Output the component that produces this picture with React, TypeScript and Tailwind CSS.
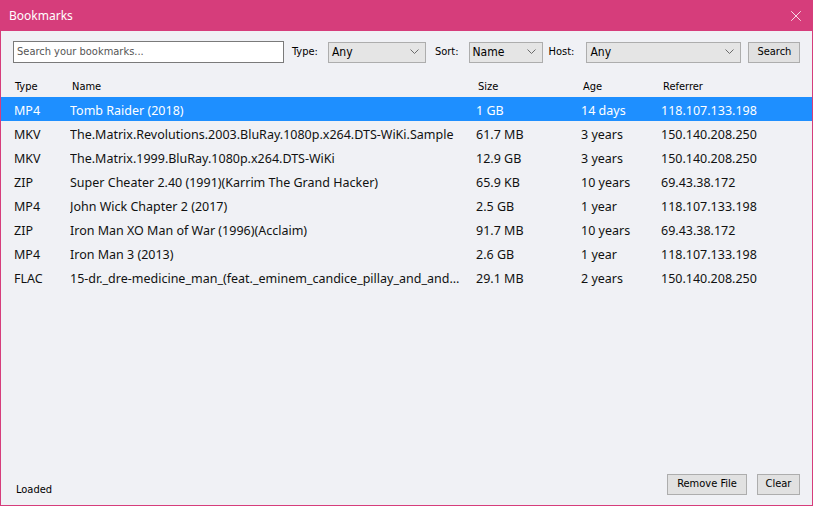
import { X } from 'lucide-react'

const rows = [
  { type: 'MP4', name: 'Tomb Raider (2018)', size: '1 GB', age: '14 days', ref: '118.107.133.198' },
  { type: 'MKV', name: 'The.Matrix.Revolutions.2003.BluRay.1080p.x264.DTS-WiKi.Sample', size: '61.7 MB', age: '3 years', ref: '150.140.208.250' },
  { type: 'MKV', name: 'The.Matrix.1999.BluRay.1080p.x264.DTS-WiKi', size: '12.9 GB', age: '3 years', ref: '150.140.208.250' },
  { type: 'ZIP', name: 'Super Cheater 2.40 (1991)(Karrim The Grand Hacker)', size: '65.9 KB', age: '10 years', ref: '69.43.38.172' },
  { type: 'MP4', name: 'John Wick Chapter 2 (2017)', size: '2.5 GB', age: '1 year', ref: '118.107.133.198' },
  { type: 'ZIP', name: 'Iron Man XO Man of War (1996)(Acclaim)', size: '91.7 MB', age: '10 years', ref: '69.43.38.172' },
  { type: 'MP4', name: 'Iron Man 3 (2013)', size: '2.6 GB', age: '1 year', ref: '118.107.133.198' },
  { type: 'FLAC', name: '15-dr._dre-medicine_man_(feat._eminem_candice_pillay_and_anderson_paak)', size: '29.1 MB', age: '2 years', ref: '150.140.208.250' },
]

const Chevron = () => (
  <svg width="9" height="6" viewBox="0 0 9 6" fill="none" stroke="#6b6b6b" strokeWidth="1">
    <path d="M0.5 0.5 L4.5 4.5 L8.5 0.5" />
  </svg>
)

const Select = ({ value, width }: { value: string; width: string }) => (
  <div className={`${width} h-[21px] flex items-center justify-between pl-[3px] pr-[6px] bg-[#e5e5e5] border border-[#adadad] text-[12px] text-black`}>
    <span>{value}</span>
    <Chevron />
  </div>
)

const ui = { fontFamily: '"Noto Sans", "Open Sans", sans-serif' }
const small = { fontFamily: '"DejaVu Sans Condensed", "Noto Sans", sans-serif' }

export default function App() {
  return (
    <div className="w-[813px] h-[506px] flex flex-col bg-[#d63d7b] p-[1px] pt-0" style={ui}>
      <div className="h-[31px] shrink-0 flex items-center justify-between pl-[8px] pr-[7px] text-white text-[12px]">
        <span>Bookmarks</span>
        <X className="w-[18px] h-[18px]" strokeWidth={1.1} />
      </div>
      <div className="flex-1 flex flex-col bg-[#f0f1f5] min-h-0">
        <div className="flex items-center mt-[10px] ml-[12px] h-[22px] text-[11px] text-black" style={small}>
          <div className="w-[271px] h-[22px] bg-white border border-[#7a7a7a] flex items-center pl-[3px] text-[#555]">
            Search your bookmarks...
          </div>
          <span className="ml-[8px] mr-[10px]">Type:</span>
          <Select value="Any" width="w-[98px]" />
          <span className="ml-[9px] mr-[10px]">Sort:</span>
          <Select value="Name" width="w-[74px]" />
          <span className="ml-[6px] mr-[12px]">Host:</span>
          <Select value="Any" width="w-[155px]" />
          <div className="ml-[7px] w-[52px] h-[21px] bg-[#e1e1e1] border border-[#adadad] flex items-center justify-center">
            Search
          </div>
        </div>

        <div className="mt-[14px] h-[20px] flex items-center text-[11px] text-black" style={small}>
          <div className="w-[70px] pl-[14px]">Type</div>
          <div className="w-[406px] pl-[1px]">Name</div>
          <div className="w-[105px] pl-[1px]">Size</div>
          <div className="w-[80px] pl-[1px]">Age</div>
          <div className="flex-1 pl-[1px]">Referrer</div>
        </div>

        <div className="flex flex-col text-[12.5px]">
          {rows.map((r, i) => (
            <div
              key={i}
              className={`h-[24px] pt-[4px] flex items-center ${i === 0 ? 'bg-[#1e8fff] text-white' : 'text-[#111]'}`}
            >
              <div className="w-[69px] pl-[13px]">{r.type}</div>
              <div className="w-[406px] pr-[14px] truncate">{r.name}</div>
              <div className="w-[105px]">{r.size}</div>
              <div className="w-[80px]">{r.age}</div>
              <div className="flex-1">{r.ref}</div>
            </div>
          ))}
        </div>

        <div className="mt-auto mb-[10px] flex items-end justify-between pl-[15px] pr-[12px] text-[11px] text-black" style={small}>
          <span className="mb-[-3px]">Loaded</span>
          <div className="flex gap-[10px]">
            <div className="w-[80px] h-[21px] bg-[#e1e1e1] border border-[#adadad] flex items-center justify-center">
              Remove File
            </div>
            <div className="w-[43px] h-[21px] bg-[#e1e1e1] border border-[#adadad] flex items-center justify-center">
              Clear
            </div>
          </div>
        </div>
      </div>
    </div>
  )
}
